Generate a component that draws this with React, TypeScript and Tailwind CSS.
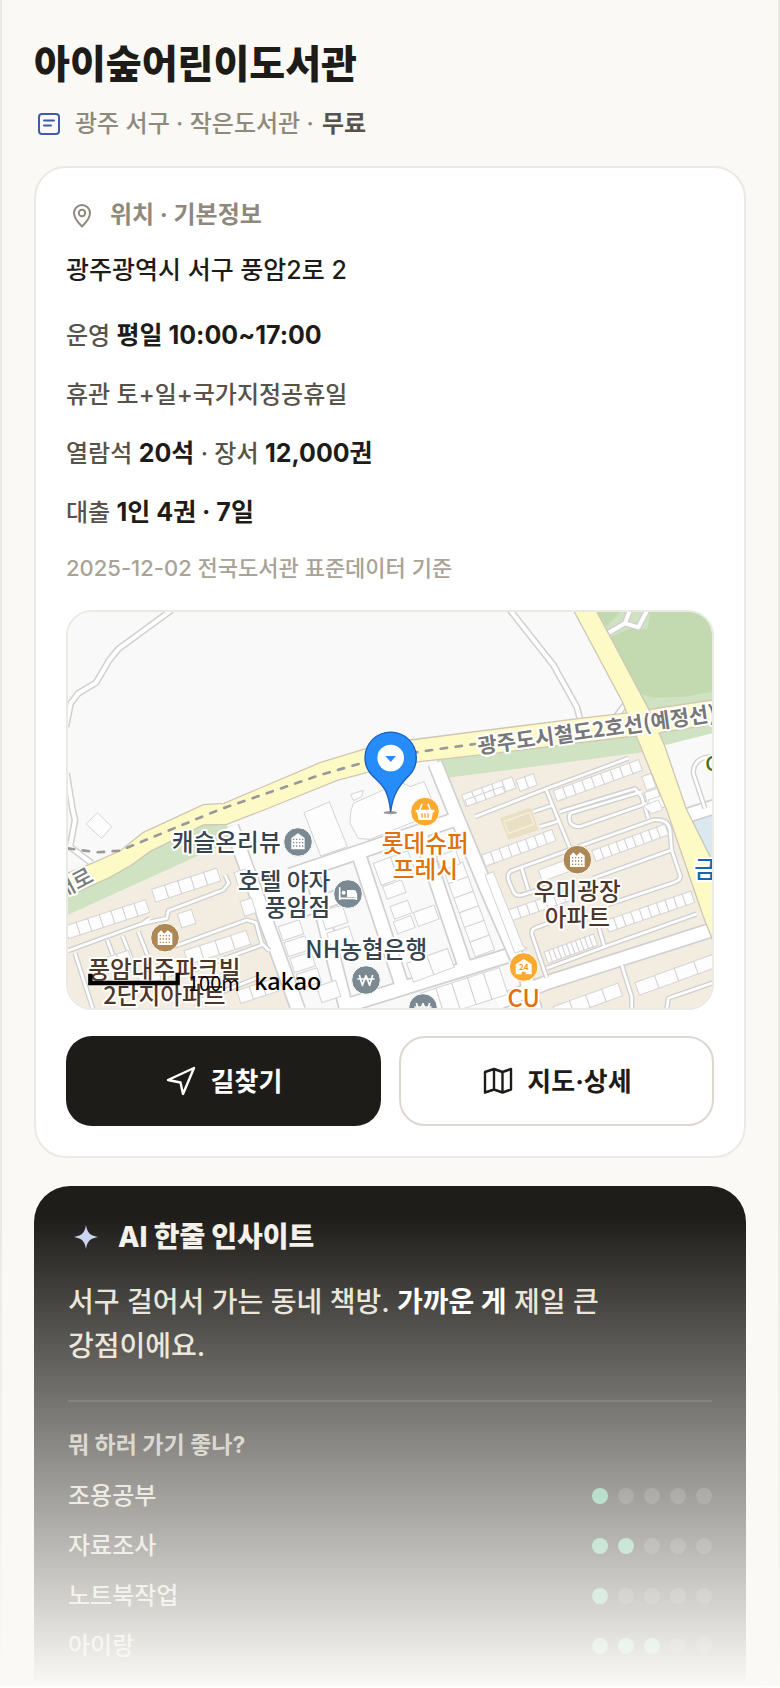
import type { ReactNode } from "react";

const HOURS = [
  [{ text: "운영 " }, { text: "평일 10:00~17:00", strong: true }],
  [{ text: "휴관 토+일+국가지정공휴일" }],
  [
    { text: "열람석 " },
    { text: "20석", strong: true },
    { text: " · 장서 " },
    { text: "12,000권", strong: true },
  ],
  [{ text: "대출 " }, { text: "1인 4권 · 7일", strong: true }],
];

const SCORES = [
  { label: "조용공부", score: 1 },
  { label: "자료조사", score: 2 },
  { label: "노트북작업", score: 1 },
  { label: "아이랑", score: 3 },
];

function LibraryIcon() {
  return (
    <svg viewBox="0 0 28 28" className="w-7 h-7 shrink-0" fill="none" stroke="#3f5ba9" strokeWidth="2" strokeLinecap="round" aria-hidden="true">
      <rect x="4" y="4" width="20" height="20" rx="3" />
      <path d="M9 10.500h10M9 15.500h7" />
    </svg>
  );
}

function PinIcon() {
  return (
    <svg viewBox="0 0 28 28" className="w-7 h-7 shrink-0" fill="none" stroke="#8f897c" strokeWidth="2" aria-hidden="true">
      <path d="M14 25.500C10.500 22 6 17.800 6 12a8 8 0 0 1 16 0c0 5.800-4.500 10-8 13.500Z" strokeLinejoin="round" />
      <circle cx="14" cy="12" r="3.200" />
    </svg>
  );
}

function NavigateIcon() {
  return (
    <svg viewBox="0 0 32 32" className="w-8 h-8 shrink-0" fill="none" stroke="currentColor" strokeWidth="2.400" strokeLinejoin="round" aria-hidden="true">
      <path d="M3 15 29 3 18 29 15.500 17.500Z" />
    </svg>
  );
}

function MapIcon() {
  return (
    <svg viewBox="0 0 32 32" className="w-8 h-8 shrink-0" fill="none" stroke="currentColor" strokeWidth="2.400" strokeLinejoin="round" aria-hidden="true">
      <path d="M4 7 13 4 21.500 7 30 4V24.500L21.500 27.500 13 24.500 4 27.500ZM13 4V24.500M21.500 7V27.500" />
    </svg>
  );
}

function SparkIcon() {
  return (
    <svg viewBox="0 0 28 28" className="w-7 h-7 shrink-0" fill="#c9d3f0" aria-hidden="true">
      <path d="M14 2C15.200 9.500 17.500 12.200 26 14 17.500 15.800 15.200 18.500 14 26 12.800 18.500 10.500 15.800 2 14 10.500 12.200 12.800 9.500 14 2Z" />
    </svg>
  );
}

// x, y, length, depth, units, angle
const BUILDINGS = [
  [275, 868, 205, 40, 5, -18],
  [14, 978, 255, 40, 7, -18],
  [372, 1052, 196, 44, 4, -18],
  [352, 942, 44, 44, 1, -18],
  [100, 1085, 110, 34, 3, -18],
  [530, 1172, 120, 40, 3, -18],
  [230, 1120, 130, 40, 4, -18],
  [540, 905, 36, 46, 1, -18],
  [522, 818, 34, 60, 1, -18],
  [655, 980, 66, 44, 1, -18],
  [672, 1028, 66, 44, 1, -18],
  [690, 1076, 66, 44, 1, -18],
  [708, 1124, 66, 44, 1, -18],
  [800, 1000, 70, 60, 1, -18],
  [780, 936, 70, 56, 1, -18],
  [770, 1160, 60, 50, 1, -18],
  [940, 790, 110, 70, 2, -20],
  [968, 860, 60, 40, 1, -20],
  [990, 920, 56, 40, 1, -20],
  [1000, 966, 56, 38, 1, -20],
  [1060, 938, 66, 44, 1, -20],
  [1040, 1090, 130, 60, 2, -20],
  [1080, 1180, 250, 84, 5, -18],
  [1208, 786, 280, 62, 6, 70],
  [1130, 770, 60, 44, 1, -20],
  [1205, 585, 160, 36, 5, -20],
  [1368, 540, 55, 36, 2, -20],
  [1480, 572, 272, 34, 9, -20],
  [1215, 600, 120, 20, 4, -20],
  [1265, 765, 224, 36, 8, -20],
  [1596, 752, 232, 34, 9, -20],
  [1435, 810, 90, 36, 1, -20],
  [1345, 930, 200, 34, 7, -19],
  [1635, 962, 272, 36, 10, -19],
  [1452, 1056, 158, 36, 11, -20],
  [1725, 1148, 250, 40, 4, -20],
  [1480, 1220, 206, 40, 4, -20],
  [1745, 530, 30, 44, 1, -20],
  [1752, 578, 42, 60, 1, -18],
  [1765, 600, 60, 34, 1, -18],
];

const ROADS = [
  "M335 30 175 147 148 180 108 248 55 280 32 310 18 380",
  "M20 520 38 630 45 660 30 740 95 790",
  "M1350 30 1480 195 1550 320 1562 365",
  "M1668 350 1698 310",
  "M1640 102 1695 70 1710 30M1695 70 1735 82 1762 30",
];

const STREETS = [
  "M515 680 715 1230",
  "M1125 490 1190 650 1290 890 1400 1140 1425 1230",
  "M690 826 1180 660",
  "M755 815 860 1230",
  "M900 775 1030 1170",
  "M1080 700 1215 1100",
  "M700 940 860 880",
  "M850 1220 1340 1068",
  "M1310 1210 1460 1148 1970 985",
  "M1870 650 1970 618",
];

const LANES = [
  "M24 1052 250 970 320 955 325 932 490 870 506 850 495 825M240 975 270 955",
  "M142 1020 175 1110M188 1008 225 1105M235 995 262 1065M45 1060 100 1230",
  "M340 1040 560 960 588 968 605 1030 628 1052M605 1035 400 1110M400 1210 600 1130",
  "M1245 650 1455 568 1705 475M1458 568 1530 745",
  "M1500 635 1725 566 1745 590 1765 655",
  "M1420 635 1480 615M1440 680 1500 662",
  "M1530 640Q1520 680 1560 680L1790 600M1530 640 1745 575",
  "M1500 760 1780 660Q1825 655 1830 690L1835 750 1860 825Q1865 840 1840 848L1640 915",
  "M1555 740 1355 812Q1340 820 1346 842L1362 878Q1370 890 1390 884L1480 855M1385 805 1405 870M1835 750 1600 835",
  "M1560 935 1425 984Q1410 990 1418 1010L1460 1132M1460 1105 1640 1038 1910 942M1610 960 1632 1036",
  "M1685 1095 1715 1190V1230M1820 1230 1825 1195 1960 1148",
  "M1960 470Q1900 470 1900 520L1935 625",
];

// Streets share one look: a grey casing with a white body on top.
function Casing({ paths, outer, inner }: { paths: string[]; outer: number; inner: number }) {
  return (
    <g fill="none" strokeLinejoin="round">
      <path d={paths.join("")} stroke="#d0d0d0" strokeWidth={outer} />
      <path d={paths.join("")} stroke="#fff" strokeWidth={inner} />
    </g>
  );
}

function Spot({ x, y, fill, children }: { x: number; y: number; fill: string; children: ReactNode }) {
  return (
    <g transform={`translate(${x} ${y})`}>
      <circle r="43" fill={fill} stroke="#fff" strokeWidth="3" />
      {children}
    </g>
  );
}

function Tower() {
  return (
    <>
      <path d="M-20 22V-12L0-26 20-12V22Z" fill="#fff" />
      <path d="M-15-8H16M-15 2H16M-15 12H16" stroke="#7b8a92" strokeWidth="4" strokeDasharray="4 5" />
    </>
  );
}

function Flats() {
  return (
    <>
      <path d="M-22 22V-12L-12-22-2-12 8-22 22-12V22Z" fill="#fff" />
      <path d="M-16-6H18M-16 4H18M-16 14H18" stroke="#ad8854" strokeWidth="4" strokeDasharray="4 5" />
    </>
  );
}

function Won() {
  return <path d="M-20-15-11 16 0-13 11 16 20-15M-26-3H26" fill="none" stroke="#fff" strokeWidth="5" strokeLinejoin="round" />;
}

function LocationMap() {
  return (
    <svg
      viewBox="24 36 1932 1188"
      preserveAspectRatio="xMidYMid slice"
      className="block w-full h-full font-['Noto_Sans_CJK_KR',sans-serif]"
      role="img"
      aria-label="광주광역시 서구 풍암2로 2 지도"
    >
      <rect x="24" y="36" width="1932" height="1188" fill="#f9f9f9" />

      {/* land use */}
      <path d="M24 888 150 832 212 797 270 755 430 675 500 673 520 720 24 945Z" fill="#cfe2c2" />
      <path d="M24 945 520 720 705 1224H24Z" fill="#f3ece1" />
      <path d="M1145 530 1750 456 1940 960 1956 1010V1224H1425L1290 870 1190 640Z" fill="#f3ece1" />
      <path d="M1130 480 1740 400 1755 456 1150 535Z" fill="#cfe2c2" />
      <path d="M1600 36H1956V400L1815 436Z" fill="#cfe2c2" />
      <path d="M1610 36 1640 80 1680 36ZM1650 112 1720 82 1760 90 1772 36H1956V275L1870 290 1780 293 1745 282Z" fill="#c3d9b0" />
      <path d="M1320 655 1412 622 1436 690 1345 720Z" fill="#e9dfc3" />
      <path d="M1332 665 1408 637 1422 672 1346 700Z" fill="none" stroke="#f6efdc" strokeWidth="4" />
      <path d="M1890 665 1956 642V780H1935Z" fill="#dbe8f0" />

      <Casing paths={ROADS} outer={21} inner={12} />
      <Casing paths={STREETS} outer={48} inner={38} />
      <Casing paths={LANES} outer={16} inner={8} />

      {/* buildings */}
      <g fill="#fdfdfd" stroke="#d4d4d4" strokeWidth="3">
        {BUILDINGS.map(([x, y, length, depth, units, angle]) => (
          <g key={`${x}-${y}`} transform={`translate(${x} ${y}) rotate(${angle})`}>
            {Array.from({ length: units }, (_, i) => (
              <rect key={i} x={(i * length) / units} width={length / units} height={depth} />
            ))}
          </g>
        ))}
        <path d="M112 638 78 672 125 715 155 680Z" />
        <path d="M732 638 808 606 862 740 782 768Z" />
        <path d="M872 636 880 610 970 570 1010 540 1050 560 1092 545 1120 610 1100 650 930 718 895 715 870 670Z" />
        <path d="M872 583 910 571 905 590 880 602ZM1750 618 1795 600 1808 630 1775 640Z" />
        <path d="M1275 825 1300 815 1390 1040 1402 1045 1365 1060Z" />
      </g>

      {/* main roads */}
      <path
        d="M10 825 100 788 180 753 250 697 430 614 492 610 780 488 920 445 1050 420 1560 355 1690 340 1970 298V372L1750 405 1320 458 1140 478 1060 487 930 515 830 542 612 630 500 673 430 675 270 755 212 797 150 832 10 895Z"
        fill="#fefac6"
        stroke="#cfc7b6"
        strokeWidth="4"
      />
      <path d="M1540 30 1687 305 1750 460 1820 630 1930 950 1970 1050V810L1878 625 1815 440 1765 325 1608 30Z" fill="#fefac6" stroke="#cfc7b6" strokeWidth="4" />
      <path d="M1690 344 1758 328 1806 396 1740 404Z" fill="#fefac6" />
      <path
        d="M24 745 110 757 180 752 330 690 480 628 780 525 920 485 1080 455 1245 432"
        fill="none"
        stroke="#999"
        strokeWidth="8"
        strokeLinecap="round"
        strokeDasharray="19 26"
      />

      {/* place names */}
      <g fontSize="71" fontWeight="500" stroke="#fff" strokeWidth="12" strokeLinejoin="round" paintOrder="stroke">
        <text transform="translate(1256 462) rotate(-8)" fontSize="63" fontWeight="700" fill="#777">광주도시철도2호선(예정선)</text>
        <text transform="translate(105 842) rotate(-28)" fontSize="66" fill="#7a7a7a" textAnchor="end">대로</text>
        <g fill="#36444d">
          <text x="662" y="752" textAnchor="end">캐슬온리뷰</text>
          <text x="811" y="870" textAnchor="end">호텔 야자</text>
          <text x="811" y="949" textAnchor="end">풍암점</text>
          <text x="919" y="1075" textAnchor="middle">NH농협은행</text>
        </g>
        <g fill="#4e3629" textAnchor="middle">
          <text x="313" y="1133">풍암대주파크빌</text>
          <text x="313" y="1212">2단지아파트</text>
          <text x="1552" y="900">우미광장</text>
          <text x="1552" y="978">아파트</text>
        </g>
        <g fill="#e0710c" textAnchor="middle">
          <text x="1096" y="755">롯데슈퍼</text>
          <text x="1096" y="834">프레시</text>
          <text x="1391" y="1221">CU</text>
        </g>
        <text x="1903" y="834" fill="#1668b3">금</text>
        <text x="1936" y="512" fontSize="60" fill="#3d7320">C</text>
      </g>

      <Spot x={714} y={726} fill="#7b8a92"><Tower /></Spot>
      <Spot x={864} y={882} fill="#7b8a92">
        <path d="M-25-20V18M-25 13H25M25 18V-2" fill="none" stroke="#fff" strokeWidth="5" />
        <path d="M-3-12H17Q25-12 25-4V9H-3Z" fill="#fff" />
        <circle cx="-13" cy="-4" r="6" fill="#fff" />
      </Spot>
      <Spot x={918} y={1140} fill="#7b8a92"><Won /></Spot>
      <Spot x={1089} y={1224} fill="#7b8a92"><Won /></Spot>
      <Spot x={315} y={1013} fill="#ad8854"><Flats /></Spot>
      <Spot x={1552} y={779} fill="#ad8854"><Flats /></Spot>
      <Spot x={1095} y={635} fill="#fba92f">
        <path d="M-28-6H28V2H24L19 25H-19L-24 2H-28Z" fill="#fff" />
        <path d="M-16-4-9-24M16-4 9-24" stroke="#fff" strokeWidth="5" />
        <path d="M-9 5V18M0 5V18M9 5V18" stroke="#fba92f" strokeWidth="4" />
      </Spot>
      <Spot x={1391} y={1101} fill="#fba92f">
        <path d="M-24 22V-8L0-24 24-8V22H6V14H-6V22Z" fill="#fff" />
        <text y="9" fontSize="24" fontWeight="700" textAnchor="middle" fill="#f29a1c">24</text>
      </Spot>

      {/* selected place */}
      <ellipse cx="991" cy="638" rx="20" ry="5" fill="#000" opacity=".4" />
      <path d="M992 636C986 570 968 555 936 526A77 77 0 1 1 1048 526C1016 558 998 585 992 636Z" fill="#258cf9" stroke="#1a5fbd" strokeWidth="4" />
      <circle cx="992" cy="474" r="40" fill="#fff" />
      <path d="M976 468H1008L992 486Z" fill="#258cf9" />

      {/* scale and provider */}
      <path d="M91 1121V1149H353V1118" fill="none" stroke="#000" strokeWidth="13" />
      <text x="384" y="1174" fontSize="60" fontWeight="400">100m</text>
      <text x="583" y="1170" fontSize="70" fontWeight="500" className="font-['Noto_Sans',sans-serif]">kakao</text>
    </svg>
  );
}

function ScoreDots({ score }: { score: number }) {
  return (
    <div className="flex gap-[10px]" role="img" aria-label={`5점 중 ${score}점`}>
      {[1, 2, 3, 4, 5].map((n) => (
        <span key={n} className={`w-4 h-4 rounded-full ${n <= score ? "bg-[#5cb992]" : "bg-white/15"}`} />
      ))}
    </div>
  );
}

export default function App() {
  return (
    <main className="relative border-x-2 border-[#ebe9e3] bg-[#faf9f5] px-8 font-['Inter','Noto_Sans_CJK_KR',sans-serif] font-medium text-[#1e1c18]">
      <header className="pt-10">
        <h1 className="text-[39px] leading-[48px] font-extrabold">아이숲어린이도서관</h1>
        <p className="mt-5 flex items-center pl-px text-2xl leading-8 text-[#8f897c]">
          <LibraryIcon />
          <span className="ml-3">광주 서구 · 작은도서관 ·</span>
          <strong className="ml-2 font-semibold text-[#57534a]">무료</strong>
        </p>
      </header>

      <section className="mt-[26px] rounded-[32px] border-2 border-[#ebe9e3] bg-white p-[30px]">
        <h2 className="flex items-center gap-3.5 pl-0.5 text-2xl leading-[34px] font-bold text-[#8f897c]">
          <PinIcon />
          위치 · 기본정보
        </h2>
        <p className="mt-[18px] text-[25px] leading-10">광주광역시 서구 풍암2로 2</p>

        <div className="mt-4 text-2xl text-[#57534a]">
          {HOURS.map((parts) => (
            <p key={parts[0].text} className="leading-[59px]">
              {parts.map((part) =>
                "strong" in part ? (
                  <strong key={part.text} className="text-[25px] font-bold text-[#1e1c18]">{part.text}</strong>
                ) : (
                  part.text
                ),
              )}
            </p>
          ))}
        </div>
        <p className="mt-2.5 text-[22px] leading-8 text-[#a8a396]">2025-12-02 전국도서관 표준데이터 기준</p>

        <div className="mt-[26px] h-[400px] overflow-hidden rounded-[26px] border-2 border-[#ebe9e3]">
          <LocationMap />
        </div>

        <div className="mt-[26px] grid grid-cols-2 gap-[18px] text-[26px] font-bold">
          <button type="button" className="flex h-[90px] items-center justify-center gap-3.5 rounded-[26px] bg-[#1e1c18] text-white">
            <NavigateIcon />
            길찾기
          </button>
          <button type="button" className="flex h-[90px] items-center justify-center gap-3.5 rounded-[26px] border-2 border-[#dcd8d0] bg-white">
            <MapIcon />
            지도·상세
          </button>
        </div>
      </section>

      <section className="mt-7 rounded-t-[36px] bg-[#1f1d19] px-[34px] pt-[34px] pb-[15px]">
        <h2 className="flex items-center gap-[18px] pl-1 text-[28px] leading-[34px] font-extrabold text-[#f4f1ea]">
          <SparkIcon />
          AI 한줄 인사이트
        </h2>
        <p className="mt-[26px] text-[28px] leading-[44px] break-keep text-[#e6e1d5]">
          서구 걸어서 가는 동네 책방. <strong className="font-bold text-white">가까운 게</strong> 제일 큰 강점이에요.
        </p>
        <h3 className="mt-8 border-t-2 border-white/10 pt-7 text-[23px] leading-[30px] font-bold text-[#beb9ad]">
          뭐 하러 가기 좋나?
        </h3>
        <ul className="mt-[11px] text-2xl font-medium text-[#dad6cb]">
          {SCORES.map(({ label, score }) => (
            <li key={label} className="flex h-[50px] items-center justify-between">
              {label}
              <ScoreDots score={score} />
            </li>
          ))}
        </ul>
      </section>

      {/* Preview fades out into the page */}
      <div className="pointer-events-none absolute -inset-x-0.5 bottom-0 h-[470px] bg-linear-to-b from-[#faf9f5]/0 to-[#faf9f5]" />
    </main>
  );
}
